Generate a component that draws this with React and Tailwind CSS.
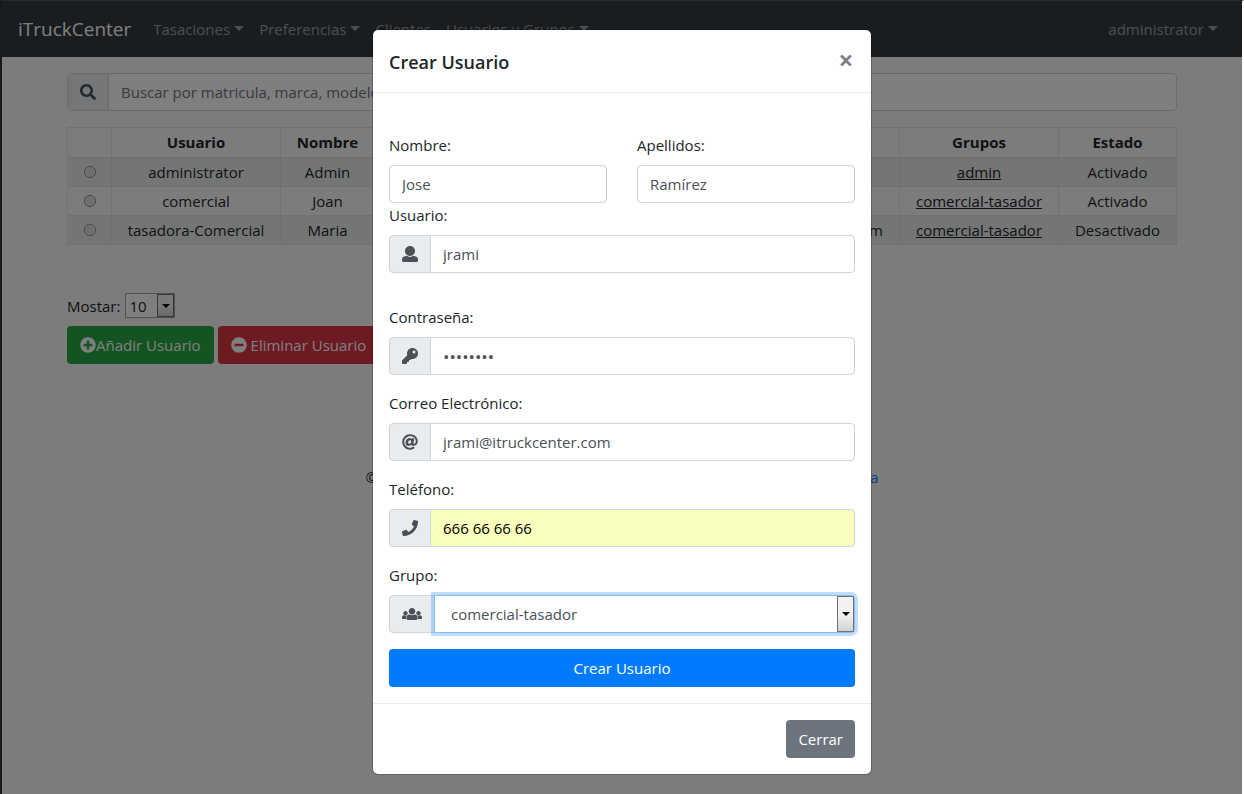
import { FaAt, FaKey, FaMinusCircle, FaPhone, FaPlusCircle, FaSearch } from "react-icons/fa";

const users = [
  { user: "administrator", name: "Admin", surname: "", email: "", group: "admin", state: "Activado" },
  { user: "comercial", name: "Joan", surname: "", email: "", group: "comercial-tasador", state: "Activado" },
  { user: "tasadora-Comercial", name: "Maria", surname: "", email: "maria@itruckcenter.com", group: "comercial-tasador", state: "Desactivado" },
];

function UserIcon() {
  return (
    <svg viewBox="0 0 512 512" className="h-4 w-4 fill-current" aria-hidden="true">
      <path d="M256 0c88.366 0 160 71.634 160 160s-71.634 160-160 160S96 248.366 96 160 167.634 0 256 0zm183.283 333.821l-71.313-17.828c-74.923 53.89-165.738 41.864-223.94 0l-71.313 17.828C29.981 344.505 0 382.903 0 426.955V464c0 26.51 21.49 48 48 48h416c26.51 0 48-21.49 48-48v-37.045c0-44.052-29.981-82.45-72.717-93.134z" />
    </svg>
  );
}

function UsersIcon() {
  return (
    <svg viewBox="0 0 640 512" className="h-4 w-5 fill-current" aria-hidden="true">
      <path d="M320 64c57.99 0 105 47.01 105 105s-47.01 105-105 105-105-47.01-105-105S262.01 64 320 64zm113.463 217.366l-39.982-9.996c-49.168 35.365-108.766 27.473-146.961 0l-39.982 9.996C174.485 289.379 152 318.177 152 351.216V412c0 19.882 16.118 36 36 36h264c19.882 0 36-16.118 36-36v-60.784c0-33.039-22.485-61.837-54.537-69.85zM528 300c38.66 0 70-31.34 70-70s-31.34-70-70-70-70 31.34-70 70 31.34 70 70 70zm-416 0c38.66 0 70-31.34 70-70s-31.34-70-70-70-70 31.34-70 70 31.34 70 70 70zm24 112v-60.784c0-16.551 4.593-32.204 12.703-45.599-29.988 14.72-63.336 8.708-85.69-7.37l-26.655 6.664C14.99 310.252 0 329.452 0 351.477V392c0 13.255 10.745 24 24 24h112.169a52.417 52.417 0 0 1-.169-4zm467.642-107.09l-26.655-6.664c-27.925 20.086-60.89 19.233-85.786 7.218C499.369 318.893 504 334.601 504 351.216V412c0 1.347-.068 2.678-.169 4H616c13.255 0 24-10.745 24-24v-40.523c0-22.025-14.99-41.225-36.358-46.567z" />
    </svg>
  );
}

function NavItem({ label, caret = true }) {
  return (
    <a href="#" className="flex items-center gap-1 whitespace-nowrap text-white/50">
      {label}
      {caret && <span className="mb-px border-x-5 border-t-5 border-x-transparent border-t-current" />}
    </a>
  );
}

function Addon({ children }) {
  return (
    <span className="flex h-[38px] shrink-0 items-center rounded-l border border-[#ced4da] bg-[#e9ecef] px-3 text-base text-[#495057]">
      {children}
    </span>
  );
}

function ArrowBox() {
  return (
    <span className="pointer-events-none absolute top-px right-px bottom-px flex w-[17px] items-center justify-center border border-[#707070] bg-linear-to-b from-[#f2f2f2] from-50% to-[#d2d2d2] to-100%">
      <span className="border-x-4 border-t-4 border-x-transparent border-t-black" />
    </span>
  );
}

function Field({ id, label, icon, type = "text", value, tone = "bg-white text-[#495057]" }) {
  return (
    <div className="flex flex-col gap-2">
      <label htmlFor={id}>{label}</label>
      <div className="flex">
        <Addon>{icon}</Addon>
        <input id={id} type={type} defaultValue={value} autoComplete="off" className={`-ml-px h-[38px] min-w-0 flex-1 rounded-r border border-[#ced4da] px-3 outline-none ${tone}`} />
      </div>
    </div>
  );
}

function NameField({ id, label, value }) {
  return (
    <div className="flex min-w-0 flex-col gap-2">
      <label htmlFor={id}>{label}</label>
      <input id={id} defaultValue={value} className="h-[38px] w-full rounded border border-[#ced4da] bg-white px-3 text-[#495057] outline-none" />
    </div>
  );
}

function Page() {
  return (
    <div className="col-start-1 row-start-1 min-w-0">
      <nav className="flex h-14 items-center bg-[#343a40] pr-6 pl-4">
        <a href="#" className="mr-[22px] text-[19px] text-white">iTruckCenter</a>
        <div className="flex flex-1 gap-[15px]">
          <NavItem label="Tasaciones" />
          <NavItem label="Preferencias" />
          <NavItem label="Clientes" caret={false} />
          <NavItem label="Usuarios y Grupos" />
        </div>
        <NavItem label="administrator" />
      </nav>

      <main className="mx-auto max-w-[1140px] px-[15px] pt-4">
        <div className="flex">
          <Addon><FaSearch /></Addon>
          <input aria-label="Buscar" placeholder="Buscar por matricula, marca, modelo" className="-ml-px h-[38px] min-w-0 flex-1 rounded-r border border-[#ced4da] bg-white px-3 placeholder:text-[#6c757d]" />
        </div>

        <table className="mt-4 w-full table-fixed border-collapse text-center">
          <colgroup>
            <col className="w-11" />
            <col className="w-[169px]" />
            <col className="w-[94px]" />
            <col />
            <col />
            <col className="w-[159px]" />
            <col className="w-[118px]" />
          </colgroup>
          <thead>
            <tr className="h-[30px]">
              {["", "Usuario", "Nombre", "", "", "Grupos", "Estado"].map((title, i) => (
                <th key={i} className="border border-b-2 border-[#dee2e6] p-0 font-bold">{title}</th>
              ))}
            </tr>
          </thead>
          <tbody>
            {users.map((u) => (
              <tr key={u.user} className="h-[29px] odd:bg-[#e9ecea]">
                <td className="border border-[#dee2e6] p-0">
                  <input type="radio" name="user" aria-label={u.user} className="mx-auto block h-3 w-3 appearance-none rounded-full border border-[#8a8a8a] bg-[#dcdcdc] shadow-[inset_0_0_0_1px_#f6f6f6]" />
                </td>
                <td className="border border-[#dee2e6] p-0">{u.user}</td>
                <td className="border border-[#dee2e6] p-0">{u.name}</td>
                <td className="border border-[#dee2e6] p-0">{u.surname}</td>
                <td className="border border-[#dee2e6] p-0 pr-4 text-right">{u.email}</td>
                <td className="border border-[#dee2e6] p-0"><a href="#" className="underline">{u.group}</a></td>
                <td className="border border-[#dee2e6] p-0">{u.state}</td>
              </tr>
            ))}
          </tbody>
        </table>

        <div className="mt-12 flex items-center gap-[5px]">
          <label htmlFor="page-size">Mostar:</label>
          <span className="relative flex">
            <select id="page-size" className="h-[25px] w-[50px] appearance-none border border-[#a0a0a0] bg-white px-[3px]">
              <option>10</option>
            </select>
            <ArrowBox />
          </span>
        </div>
        <div className="mt-2 flex gap-1 text-white">
          <button type="button" className="flex h-[38px] items-center rounded bg-[#28a745] px-[13px]">
            <FaPlusCircle className="h-4 w-4" />Añadir Usuario
          </button>
          <button type="button" className="flex h-[38px] items-center gap-1 rounded bg-[#dc3545] px-[13px]">
            <FaMinusCircle className="h-4 w-4" />Eliminar Usuario
          </button>
        </div>
      </main>

      <footer className="mx-auto mt-[101px] flex max-w-[513px] justify-between">
        <span>©</span>
        <a href="#" className="text-[#007bff]">Ayuda</a>
      </footer>
    </div>
  );
}

function CreateUserDialog() {
  return (
    <div className="z-10 col-start-1 row-start-1 bg-black/50 px-2 py-7">
      <div role="dialog" aria-labelledby="dialog-title" className="mx-auto max-w-[500px] rounded-md border border-black/20 bg-white bg-clip-padding">
        <header className="flex h-[63px] items-start justify-between border-b border-[#e9ecef] p-4">
          <h5 id="dialog-title" className="text-[18px] leading-8 font-semibold">Crear Usuario</h5>
          <button type="button" aria-label="Close" className="flex h-7 w-[18px] items-center justify-center text-[26px] leading-7 font-bold text-black/50">×</button>
        </header>
        <form className="flex flex-col gap-4 px-4 pt-10 pb-4" onSubmit={(e) => e.preventDefault()}>
          <div className="mb-4 flex flex-col">
            <div className="grid grid-cols-2 gap-[30px]">
              <NameField id="first-name" label="Nombre:" value="Jose" />
              <NameField id="last-name" label="Apellidos:" value="Ramírez" />
            </div>
            <Field id="username" label="Usuario:" value="jrami" icon={<UserIcon />} />
          </div>
          <Field id="password" label="Contraseña:" type="password" value="12345678" icon={<FaKey />} tone="bg-white text-[17px] text-[#495057]" />
          <Field id="email" label="Correo Electrónico:" type="email" value="jrami@itruckcenter.com" icon={<FaAt />} />
          <Field id="phone" label="Teléfono:" type="tel" value="666 66 66 66" icon={<FaPhone />} tone="bg-[#faffbd] text-black" />
          <div className="flex flex-col gap-2">
            <label htmlFor="group">Grupo:</label>
            <div className="flex">
              <Addon><UsersIcon /></Addon>
              <span className="relative -ml-px flex flex-1">
                <select id="group" className="h-[38px] w-full appearance-none rounded-r border border-[#80bdff] bg-white px-4 text-[#495057] shadow-[0_0_0_3px_rgba(0,123,255,0.25)] outline-none">
                  <option>comercial-tasador</option>
                </select>
                <ArrowBox />
              </span>
            </div>
          </div>
          <button type="submit" className="h-[38px] rounded bg-[#007bff] text-white">Crear Usuario</button>
        </form>
        <footer className="flex justify-end border-t border-[#e9ecef] p-4">
          <button type="button" className="h-[38px] rounded bg-[#6c757d] px-3 text-white">Cerrar</button>
        </footer>
      </div>
    </div>
  );
}

export default function App() {
  return (
    <div className="grid min-h-screen grid-cols-1 border-x-2 border-t border-t-[#262b29] border-r-white border-l-[#161c1e] bg-[#f9f9f9] font-['Open_Sans',sans-serif] text-[15px] leading-6 text-[#212529]">
      <Page />
      <CreateUserDialog />
    </div>
  );
}
